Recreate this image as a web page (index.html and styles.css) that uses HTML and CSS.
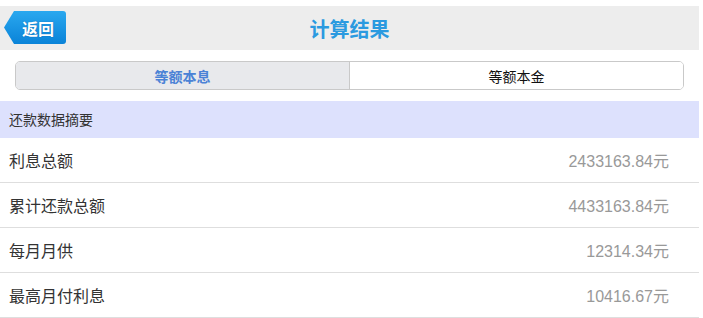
FILE: index.html
```html
<!DOCTYPE html>
<html lang="zh-CN">
<head>
<meta charset="utf-8">
<title>计算结果</title>
<link rel="stylesheet" href="styles.css">
</head>
<body>
<div class="page">
  <header class="topbar">
    <div class="topbar-left"><a class="back" href="#">返回</a></div>
    <h1 class="title">计算结果</h1>
    <div class="topbar-right"></div>
  </header>
  <div class="segment">
    <div class="seg seg-active">等额本息</div>
    <div class="seg">等额本金</div>
  </div>
  <div class="band">还款数据摘要</div>
  <ul class="list">
    <li class="row"><span class="label">利息总额</span><span class="value">2433163.84元</span></li>
    <li class="row"><span class="label">累计还款总额</span><span class="value">4433163.84元</span></li>
    <li class="row"><span class="label">每月月供</span><span class="value">12314.34元</span></li>
    <li class="row"><span class="label">最高月付利息</span><span class="value">10416.67元</span></li>
  </ul>
</div>
</body>
</html>
```
FILE: styles.css
```css
* { box-sizing: border-box; }
html, body { margin: 0; padding: 0; background: #fff; }
body {
  font-family: "Liberation Sans", "Noto Sans CJK SC", sans-serif;
  color: #333;
}
.page { width: 699px; }

.topbar {
  margin-top: 6px;
  height: 44px;
  background: #ededed;
  display: grid;
  grid-template-columns: 1fr auto 1fr;
  align-items: center;
}
.topbar-left { display: flex; align-items: center; padding-left: 4px; }
.back {
  display: flex;
  align-items: center;
  width: 62px;
  height: 33px;
  margin-top: -1px;
  padding-left: 18px;
  color: #fff;
  font-weight: bold;
  font-size: 16px;
  text-decoration: none;
  background: linear-gradient(#2aa8ef, #0a83d8);
  clip-path: path("M10 0 H59 Q62 0 62 3 V30 Q62 33 59 33 H10 L0 16.5 Z");
  text-shadow: 0 0 1px rgba(0,60,120,0.6);
}
.title {
  margin: 0;
  font-size: 20px;
  font-weight: bold;
  color: #2b9ae0;
}

.segment {
  margin: 11px 15px 0;
  height: 29px;
  display: flex;
  border: 1px solid #c9c9c9;
  border-radius: 5px;
  overflow: hidden;
}
.seg {
  flex: 1;
  display: flex;
  align-items: center;
  justify-content: center;
  font-size: 14px;
  color: #111;
  background: #fff;
}
.seg-active {
  background: #e8e9ec;
  color: #4b82d6;
  font-weight: bold;
  border-right: 1px solid #c9c9c9;
}

.band {
  margin-top: 11px;
  height: 37px;
  background: #dde1fd;
  display: flex;
  align-items: center;
  padding: 0 9px 1px;
  font-size: 14px;
  color: #333;
}

.list { list-style: none; margin: 0; padding: 0; }
.row {
  height: 45px;
  display: flex;
  align-items: center;
  justify-content: space-between;
  padding: 0 30px 0 9px;
  border-bottom: 1px solid #dedede;
  font-size: 16px;
}
.label { color: #333; }
.value { color: #999; }
```
